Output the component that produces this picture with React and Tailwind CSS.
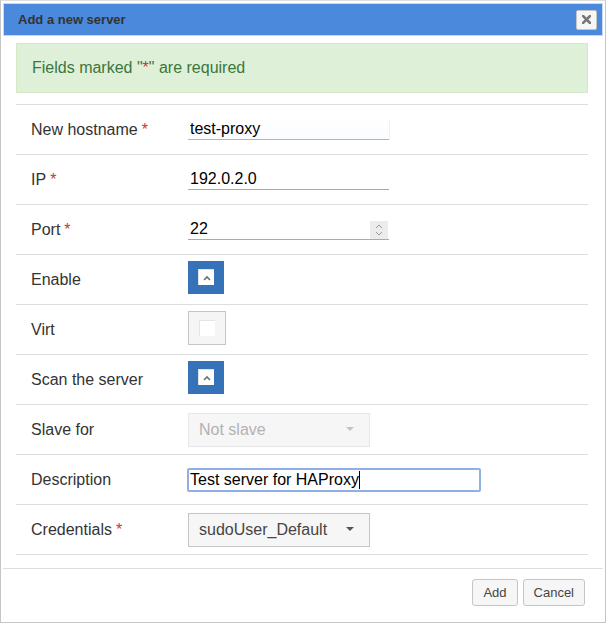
import React from "react";

function Req() {
  return <span className="text-[#cd3333] ml-[4px]">*</span>;
}

function Caret({ color }) {
  return (
    <svg width="8" height="5" viewBox="0 0 8 5">
      <path d="M0 0 L8 0 L4 4 Z" fill={color} />
    </svg>
  );
}

function Toggle() {
  return (
    <div className="w-[36px] h-[33px] bg-[#3572b8] flex items-center justify-center mb-[5px]">
      <div className="w-[16px] h-[16px] bg-white border-t border-l border-[#e2e2e2] flex items-center justify-center">
        <svg width="8" height="6" viewBox="0 0 8 6">
          <path d="M1 5 L4 2 L7 5" fill="none" stroke="#6f6f6f" strokeWidth="1.6" />
        </svg>
      </div>
    </div>
  );
}

function Row({ label, req, children }) {
  return (
    <div className="h-[50px] border-t border-[#dddddd] flex items-center">
      <div className="w-[172px] pl-[15px] text-[16px] text-[#333333]">
        {label}
        {req && <Req />}
      </div>
      <div className="flex items-center">{children}</div>
    </div>
  );
}

export default function App() {
  return (
    <div className="w-[608px] h-[624px] bg-white font-['Liberation_Sans',Arial,sans-serif]">
      <div className="w-[606px] h-[623px] border border-[#c5c5c5] border-t-[#dddddd] p-[2px] flex flex-col">
        <div className="h-[33px] bg-[#4a89dc] border border-[#c8d9ef] flex items-center justify-between pl-[14px] pr-[5px]">
          <span className="text-[13px] font-bold text-[#333333]">Add a new server</span>
          <div className="w-[21px] h-[20px] bg-[#f6f6f6] border border-[#c5c5c5] rounded-[2px] flex items-center justify-center">
            <svg width="9" height="9" viewBox="0 0 9 9">
              <path d="M1 1 L8 8 M8 1 L1 8" stroke="#777777" strokeWidth="2.6" strokeLinecap="square" />
            </svg>
          </div>
        </div>
        <div className="pl-[13px] pt-[7px]">
          <div className="w-[572px] h-[50px] bg-[#dff0d8] border border-[#d6e9c6] flex items-center pl-[15px] text-[16px] text-[#3c763d]">
            Fields marked "<span className="text-[#cd3333]">*</span>" are required
          </div>
          <div className="w-[572px] mt-[11px] border-b border-[#dddddd]">
            <Row label="New hostname" req>
              <div className="w-[201px] h-[21px] border-b border-[#9db8e4] bg-gradient-to-b from-white to-[#fbfcff] pl-[2px] text-[16px] text-black leading-[20px] shadow-[1px_0_0_#eef2f8]">
                test-proxy
              </div>
            </Row>
            <Row label="IP" req>
              <div className="w-[201px] h-[21px] border-b border-[#aaaaaa] pl-[2px] text-[16px] text-black leading-[20px]">
                192.0.2.0
              </div>
            </Row>
            <Row label="Port" req>
              <div className="w-[201px] h-[21px] border-b border-[#aaaaaa] pl-[2px] pr-[1px] text-[16px] text-black leading-[20px] flex items-end justify-between">
                <span>22</span>
                <div className="w-[18px] h-[18px] bg-[#ececec] flex flex-col items-center justify-center gap-[2px]">
                  <svg width="8" height="5" viewBox="0 0 8 5">
                    <path d="M1 4 L4 1 L7 4" fill="none" stroke="#9a9a9a" strokeWidth="1" />
                  </svg>
                  <svg width="8" height="5" viewBox="0 0 8 5">
                    <path d="M1 1 L4 4 L7 1" fill="none" stroke="#9a9a9a" strokeWidth="1" />
                  </svg>
                </div>
              </div>
            </Row>
            <Row label="Enable">
              <Toggle />
            </Row>
            <Row label="Virt">
              <div className="w-[38px] h-[34px] bg-[#f5f5f5] border border-[#c5c5c5] flex items-center justify-center mb-[4px]">
                <div className="w-[16px] h-[16px] bg-white border-t border-l border-[#e4e4e4]" />
              </div>
            </Row>
            <Row label="Scan the server">
              <Toggle />
            </Row>
            <Row label="Slave for">
              <div className="w-[182px] h-[34px] bg-[#f6f6f6] border border-[#e6e6e6] flex items-center justify-between pl-[10px] pr-[15px] text-[16px] text-[#b2b2b2]">
                <span>Not slave</span>
                <Caret color="#c4c4c4" />
              </div>
            </Row>
            <Row label="Description">
              <div className="w-[294px] h-[24px] border-2 border-[#8fb0e4] rounded-[2px] ml-[-1px] pl-[1px] flex items-center text-[16px] text-black">
                <span>Test server for HAProxy</span>
                <span className="w-[1px] h-[18px] bg-black" />
              </div>
            </Row>
            <Row label="Credentials" req>
              <div className="w-[182px] h-[34px] bg-[#f6f6f6] border border-[#c5c5c5] flex items-center justify-between pl-[10px] pr-[15px] text-[16px] text-[#454545]">
                <span>sudoUser_Default</span>
                <Caret color="#555555" />
              </div>
            </Row>
          </div>
        </div>
        <div className="mt-[13px] border-t border-[#dddddd] pt-[10px] pr-[18px] flex justify-end gap-[5px]">
          <button className="h-[27px] px-[10px] bg-[#f6f6f6] border border-[#c5c5c5] rounded-[3px] text-[13px] text-[#454545]">
            Add
          </button>
          <button className="h-[27px] px-[10px] bg-[#f6f6f6] border border-[#c5c5c5] rounded-[3px] text-[13px] text-[#454545]">
            Cancel
          </button>
        </div>
      </div>
    </div>
  );
}
